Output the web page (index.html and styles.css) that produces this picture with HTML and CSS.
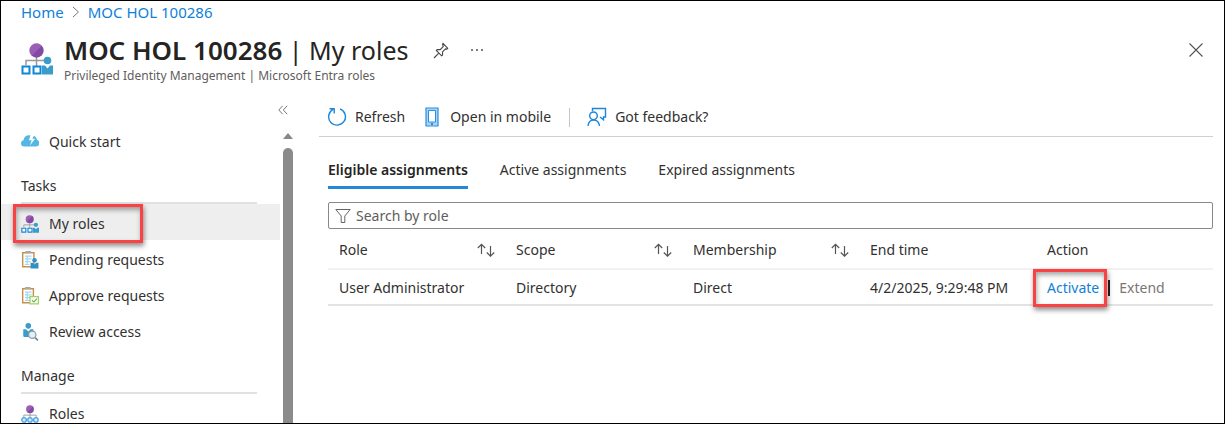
FILE: index.html
```html
<!DOCTYPE html>
<html lang="en">
<head>
<meta charset="utf-8">
<title>MOC HOL 100286 | My roles</title>
<link rel="stylesheet" href="styles.css">
</head>
<body>
<svg class="sprite" aria-hidden="true">
  <defs>
    <linearGradient id="violet" x1="0" y1="0" x2="1" y2="1"><stop offset="0.5" stop-color="#9a5fb5"/><stop offset="0.5" stop-color="#834aa3"/></linearGradient>
    <symbol id="i-myroles" viewBox="0 0 32 32">
      <path d="M15.5 14v9M5 22v-4.500h21" fill="none" stroke="#999" stroke-width="1.500"/>
      <circle cx="15.500" cy="7.500" r="7.200" fill="url(#violet)"/>
      <path d="M1.500 23.500h7v7h-7zM12.500 23.500h7v7h-7z" fill="#fff" stroke="#0f86d6" stroke-width="2"/>
      <circle cx="26.500" cy="17.500" r="3.800" fill="#3a9cc9"/>
      <path d="M21 22.500h3l2.500 3 2.500-3h3v9H21z" fill="#3a9cc9"/>
    </symbol>
    <symbol id="i-roles" viewBox="0 0 32 32">
      <path d="M16 14v9M5 22v-4h22v4" fill="none" stroke="#999" stroke-width="1.600"/>
      <circle cx="16" cy="7.500" r="7" fill="url(#violet)"/>
      <g fill="#d5ecfb" stroke="#4ba3e3" stroke-width="2.400"><circle cx="5.500" cy="26.500" r="4"/><circle cx="16" cy="26.500" r="4"/><circle cx="26.500" cy="26.500" r="4"/></g>
    </symbol>
    <symbol id="i-cloud" viewBox="0 0 32 32">
      <path d="M6 24c-4 0-6-2.500-6-5.500 0-3 2-5 4.500-5.500C5 7.500 9 4 14 4h3l-3 9h5l-3 9 9-12h-5l3-5c3 1.500 5 4 5.500 7.500 3 .5 4.500 3 4.500 5.500 0 3.500-2.500 6-6 6z" fill="#54b7e3"/>
    </symbol>
    <symbol id="i-pending" viewBox="0 0 32 32">
      <path d="M3 3h20v25H3z" fill="#fff" stroke="#c9904c" stroke-width="2.500"/>
      <path d="M8 0h10v4H8z" fill="#aaa"/>
      <path d="M7 9h12M7 14h12M7 19h10M7 24h8M11 8v17" stroke="#a5d8f2" stroke-width="2.200"/>
      <circle cx="24" cy="16.500" r="4" fill="#2e91c4"/>
      <path d="M17 21h4l3 3 3-3h4v10H17z" fill="#2e91c4"/>
    </symbol>
    <symbol id="i-approve" viewBox="0 0 32 32">
      <path d="M3 3h19v25H3z" fill="#fff" stroke="#c9904c" stroke-width="2.500"/>
      <path d="M7 0h10v4H7z" fill="#aaa"/>
      <path d="M7 9h12M7 14h12M7 19h9M7 24h9M11 8v17" stroke="#a5d8f2" stroke-width="2.200"/>
      <path d="M16 17h15v13H16z" fill="#fff" stroke="#9fd16c" stroke-width="2.400"/>
      <path d="m19.500 23.500 3.500 3 5.500-6" fill="none" stroke="#75b43c" stroke-width="2"/>
    </symbol>
    <symbol id="i-review" viewBox="0 0 32 32">
      <circle cx="13" cy="5" r="5" fill="#3a9cc9"/>
      <path d="M4 11h5l4 4 4-4h5v14H7c-2 0-3-1-3-3z" fill="#3a9cc9"/>
      <circle cx="20" cy="21" r="6.500" fill="#e0f1f9" stroke="#8f9da5" stroke-width="2.200"/>
      <path d="m25 26 5 5" stroke="#7d858a" stroke-width="3"/>
    </symbol>
    <symbol id="i-pin" viewBox="0 0 18 18">
      <path d="m11 2.500 4.700 4.700-.8.900-1.400-.2-3 3 .1 3-1 .9-5.300-5.300.9-1 3 .1 3-3-.6-2.300zM6.800 12.200 2 17" fill="none" stroke="#444" stroke-width="1.100"/>
    </symbol>
    <symbol id="i-close" viewBox="0 0 16 16"><path d="m1.500 1.500 13 13m0-13-13 13" stroke="#555" stroke-width="1.100"/></symbol>
    <symbol id="i-refresh" viewBox="0 0 20 20">
      <path d="M13 1.900a8.400 8.400 0 1 1-7 .5M2.500 1.700h4.700v4.700" fill="none" stroke="#1c86da" stroke-width="1.400"/>
    </symbol>
    <symbol id="i-mobile" viewBox="0 0 14 20">
      <path d="M1 1h12v18H1z" fill="#a9d3f5" stroke="#2b8fe0" stroke-width="1.200"/>
      <path d="M3.500 3.500h7v11.500h-7z" fill="#fff" stroke="#2b8fe0"/>
      <path d="M6 17h2" stroke="#176fb8" stroke-width="1.500"/>
    </symbol>
    <symbol id="i-feedback" viewBox="0 0 20 20">
      <path d="M5.500 4V1.500h13v8.500h-2v2.800L13 10M1 19c.5-4 2.500-6 5.500-6s5.500 2 6 6" fill="none" stroke="#1c86da" stroke-width="1.400"/>
      <circle cx="6.500" cy="8.800" r="3.800" fill="#fff" stroke="#1c86da" stroke-width="1.400"/>
    </symbol>
    <symbol id="i-filter" viewBox="0 0 16 16"><path d="M.8 1.500h14.400L9.800 8v6.500H6.200V8z" fill="none" stroke="#666"/></symbol>
    <symbol id="i-sort" viewBox="0 0 18 14">
      <path d="M4.500 11V1.500M.8 5l3.700-3.700L8.200 5" fill="none" stroke="#555" stroke-width="1.200"/>
      <path d="M13.500 3v10M9.800 9.500l3.700 3.700 3.700-3.700" fill="none" stroke="#555" stroke-width="1.200"/>
    </symbol>
  </defs>
</svg>
<div class="page">
  <header class="header">
    <nav class="breadcrumb" aria-label="Breadcrumb">
      <a href="#">Home</a>
      <svg class="chevron" viewBox="0 0 8 12" aria-hidden="true"><path d="m1 1 5.500 5L1 11" fill="none" stroke="#777"/></svg>
      <a href="#">MOC HOL 100286</a>
    </nav>
    <div class="title-bar">
      <svg class="title-icon" aria-hidden="true"><use href="#i-myroles"/></svg>
      <div class="title-text">
        <div class="title-line">
          <h1><strong>MOC HOL 100286</strong> | My roles</h1>
          <button class="icon-button" aria-label="Pin"><svg class="icon-18"><use href="#i-pin"/></svg></button>
          <button class="icon-button" aria-label="More"><svg class="icon-more" viewBox="0 0 14 4"><g fill="#555"><circle cx="2" cy="2" r="1"/><circle cx="7" cy="2" r="1"/><circle cx="12" cy="2" r="1"/></g></svg></button>
        </div>
        <p class="subtitle">Privileged Identity Management | Microsoft Entra roles</p>
      </div>
      <button class="icon-button close" aria-label="Close"><svg class="icon-16"><use href="#i-close"/></svg></button>
    </div>
  </header>
  <div class="body">
    <aside class="sidebar">
      <div class="collapse-row"><button class="icon-button" aria-label="Collapse menu"><svg class="icon-collapse" viewBox="0 0 10 10"><path d="M4.700.8.800 5l3.900 4.200M9.200.8 5.300 5l3.900 4.200" fill="none" stroke="#777"/></svg></button></div>
      <div class="side-scroll">
        <nav class="menu" aria-label="Roles menu">
          <a class="item" href="#"><svg class="icon-18"><use href="#i-cloud"/></svg>Quick start</a>
          <h2>Tasks</h2>
          <a class="item selected" href="#"><svg class="icon-18"><use href="#i-myroles"/></svg>My roles<span class="callout callout-menu"></span></a>
          <a class="item" href="#"><svg class="icon-18"><use href="#i-pending"/></svg>Pending requests</a>
          <a class="item" href="#"><svg class="icon-18"><use href="#i-approve"/></svg>Approve requests</a>
          <a class="item" href="#"><svg class="icon-18"><use href="#i-review"/></svg>Review access</a>
          <h2>Manage</h2>
          <a class="item" href="#"><svg class="icon-18"><use href="#i-roles"/></svg>Roles</a>
        </nav>
        <div class="scrollbar"><span class="arrow"></span><span class="thumb"></span></div>
      </div>
    </aside>
    <main class="main">
      <div class="toolbar">
        <button class="command"><svg class="icon-20"><use href="#i-refresh"/></svg>Refresh</button>
        <button class="command mobile"><svg class="icon-mobile"><use href="#i-mobile"/></svg>Open in mobile</button>
        <span class="divider"></span>
        <button class="command"><svg class="icon-20"><use href="#i-feedback"/></svg>Got feedback?</button>
      </div>
      <div class="content">
        <div class="tabs" role="tablist">
          <button class="tab active" role="tab" aria-selected="true">Eligible assignments</button>
          <button class="tab" role="tab" aria-selected="false">Active assignments</button>
          <button class="tab" role="tab" aria-selected="false">Expired assignments</button>
        </div>
        <label class="search">
          <svg class="icon-16"><use href="#i-filter"/></svg>
          <input type="text" placeholder="Search by role" aria-label="Search by role">
        </label>
        <table class="grid">
          <thead>
            <tr>
              <th><div class="head">Role<svg class="icon-sort"><use href="#i-sort"/></svg></div></th>
              <th><div class="head">Scope<svg class="icon-sort"><use href="#i-sort"/></svg></div></th>
              <th><div class="head">Membership<svg class="icon-sort"><use href="#i-sort"/></svg></div></th>
              <th>End time</th>
              <th>Action</th>
            </tr>
          </thead>
          <tbody>
            <tr>
              <td>User Administrator</td>
              <td>Directory</td>
              <td>Direct</td>
              <td>4/2/2025, 9:29:48 PM</td>
              <td><div class="actions"><a class="activate" href="#">Activate<span class="callout callout-action"></span></a><span class="bar"></span><span class="extend">Extend</span></div></td>
            </tr>
          </tbody>
        </table>
      </div>
    </main>
  </div>
</div>
</body>
</html>
```
FILE: styles.css
```css
* { box-sizing: border-box; }
body {
  margin: 0;
  font: 14px/20px "Noto Sans", "Open Sans", sans-serif;
  color: #323130;
  background: #fff;
}
a { color: #0f7fd8; text-decoration: none; }
button { font: inherit; color: inherit; background: none; border: 0; padding: 0; }
svg { display: block; flex: none; }
.sprite { position: absolute; width: 0; height: 0; }
.page {
  display: flex;
  flex-direction: column;
  height: 100vh;
  overflow: hidden;
  border: 1px solid #000;
}
.icon-16 { width: 16px; height: 16px; }
.icon-18 { width: 18px; height: 18px; }
.icon-20 { width: 20px; height: 20px; }
.icon-mobile { width: 14px; height: 20px; }
.icon-sort { width: 18px; height: 14px; }
.icon-more { width: 14px; height: 4px; }
.icon-collapse { width: 10px; height: 10px; }
.icon-button { display: flex; }

.header { padding: 1px 20px 0 20px; }
.breadcrumb { display: flex; align-items: center; gap: 8px; font-size: 15px; }
.chevron { width: 8px; height: 12px; }
.title-bar { display: flex; align-items: flex-start; gap: 11px; padding-top: 11px; }
.title-icon { width: 32px; height: 32px; margin-top: 10px; }
.title-text { flex: 1; }
.title-line { display: flex; align-items: center; gap: 20px; }
h1 { margin: 0 4px 0 0; font-size: 25px; line-height: 34px; font-weight: 400; color: #252423; }
h1 strong { font-size: 26px; font-weight: 600; }
.subtitle { margin: 0; font-size: 12px; line-height: 18px; color: #605e5c; }
.close { padding-top: 9px; }

.body { display: flex; flex: 1; min-height: 0; }
.sidebar { display: flex; flex-direction: column; width: 295px; flex: none; }
.collapse-row { display: flex; justify-content: flex-end; padding: 20px 8px 7px 0; }
.side-scroll { display: flex; flex: 1; min-height: 0; }
.menu { flex: 1; min-width: 0; }
.menu h2 {
  margin: 0 23px 0 20px;
  padding: 18px 0 6px;
  font-size: 14px;
  line-height: 20px;
  font-weight: 400;
  border-bottom: 2px solid #e1e1e1;
}
.item {
  position: relative;
  display: flex;
  align-items: center;
  gap: 10px;
  height: 36px;
  padding: 3px 0 0 20px;
  color: #323130;
}
.selected { background: #eee; }
.callout {
  position: absolute;
  z-index: 1;
  border: 3px solid #fb4143;
  box-shadow: 1px 3px 5px rgba(0, 0, 0, .45), inset 1px 3px 5px rgba(0, 0, 0, .35);
}
.callout-menu { left: 12px; top: 0; width: 130px; height: 39px; }
.callout-action { inset: -9px -8px -9px -14px; }
.scrollbar {
  display: flex;
  flex-direction: column;
  align-items: center;
  gap: 9px;
  width: 16px;
  padding-top: 11px;
}
.arrow { border: 5px solid transparent; border-top: 0; border-bottom: 6px solid #888; }
.thumb { flex: 1; width: 10px; border-radius: 5px 5px 0 0; background: #8b8b8b; }

.main { flex: 1; min-width: 0; padding: 0 11px 0 23px; }
.toolbar {
  display: flex;
  align-items: center;
  padding: 22px 0 9px 8px;
  border-bottom: 1px solid #d2d0ce;
}
.command { display: flex; align-items: center; gap: 8px; }
.mobile { gap: 11px; margin-left: 20px; }
.divider { width: 1px; height: 19px; margin: 0 17px 0 18px; background: #c8c6c4; }
.content { padding-left: 9px; }
.tabs { display: flex; gap: 32px; padding-top: 23px; }
.tab { padding-bottom: 6px; border-bottom: 3px solid transparent; }
.active { font-weight: 600; color: #252423; border-color: #2488d8; }
.search {
  display: flex;
  align-items: center;
  gap: 5px;
  height: 27px;
  margin-top: 13px;
  padding-left: 6px;
  border: 1px solid #8a8886;
  border-radius: 2px;
}
.search input { flex: 1; border: 0; padding: 0; outline: 0; font: inherit; background: none; }
.search input::placeholder { color: #605e5c; opacity: 1; }
.grid { width: 100%; table-layout: fixed; border-collapse: collapse; text-align: left; }
th, td { padding: 11px 10px 8px 11px; font-weight: 400; white-space: nowrap; }
th { border-bottom: 2px solid #f3f2f1; }
td { padding: 8px 0 6px 11px; border-bottom: 2px solid #e3e3e3; }
.head { display: flex; align-items: center; justify-content: space-between; }
.actions { display: flex; align-items: center; gap: 9px; }
.activate { position: relative; }
.bar { width: 2px; height: 16px; background: #222; }
.extend { color: #797775; }
```
